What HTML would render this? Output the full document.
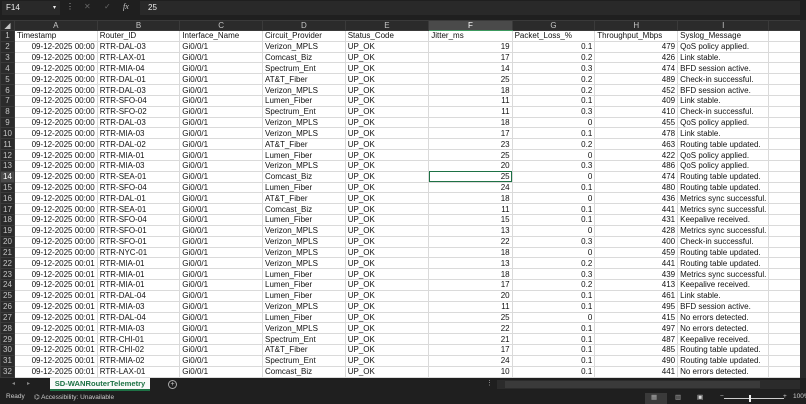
<!DOCTYPE html>
<html><head><meta charset="utf-8"><style>
*{margin:0;padding:0;box-sizing:border-box}
body{width:806px;height:404px;background:#1f1f1f;font-family:"Liberation Sans",sans-serif;overflow:hidden;position:relative;color:#ddd}
.fb{position:absolute;left:0;top:0;width:806px;height:17px;background:#1f1f1f}
.nb{position:absolute;left:2px;top:1px;width:58px;height:14px;background:#292929;font-size:8px;line-height:14px;padding-left:4px;color:#eee}
.fx{position:absolute;left:140px;top:1px;width:660px;height:14px;background:#292929;font-size:8px;line-height:14px;padding-left:8px;color:#eee}
.grid{position:absolute;left:0;top:20px;border-collapse:collapse;table-layout:fixed;font-size:8px}
.grid td{border:1px solid #dadada;background:#fff;color:#111;height:10.84px;line-height:9px;padding:0 2px;white-space:nowrap;overflow:hidden}
.grid tr.h td{background:#2b2b2b;color:#c4c4c4;border-color:#3a3a3a;text-align:center;height:10px}
.grid td.rh{background:#2b2b2b;color:#c4c4c4;border-color:#3a3a3a;text-align:center;padding:0}
.grid td.r{text-align:right}
.grid tr.h td.sel{background:#4a4a4a;color:#fff;border-bottom:1px solid #3c9a5f}
.grid td.rh.sel{background:#4a4a4a;color:#fff}
.grid td.cur{outline:1.5px solid #1e7145;outline-offset:-1px}
.vs{position:absolute;left:800px;top:20px;width:6px;height:358px;background:#2a2a2a}
.bar{position:absolute;left:0;top:378px;width:806px;height:14px;background:#1f1f1f}
.tab{position:absolute;left:50px;top:378px;width:100px;height:13px;background:#fafafa;color:#1e7145;font-weight:bold;font-size:7.6px;text-align:center;line-height:12px;border-bottom:2px solid #1e7145}
.st{position:absolute;top:393px;font-size:6.5px;color:#ccc}
</style></head><body>
<div class="fb"><div class="nb">F14 <span style="float:right;margin-right:4px;font-size:6px">▾</span></div>
<span style="position:absolute;left:66px;top:2px;font-size:8px;color:#aaa">⋮</span>
<span style="position:absolute;left:84px;top:2px;font-size:8px;color:#666">✕</span>
<span style="position:absolute;left:104px;top:2px;font-size:8px;color:#666">✓</span>
<span style="position:absolute;left:123px;top:2px;font-size:8px;color:#ccc;font-style:italic;font-family:'Liberation Serif',serif">fx</span>
<div class="fx">25</div></div>
<table class="grid">
<colgroup><col style="width:14px"><col style="width:83px"><col style="width:83px"><col style="width:83px"><col style="width:83px"><col style="width:84px"><col style="width:84px"><col style="width:83px"><col style="width:83px"><col style="width:83px"><col style="width:37px"></colgroup>
<tr class="h"><td>◢</td><td>A</td><td>B</td><td>C</td><td>D</td><td>E</td><td class="sel">F</td><td>G</td><td>H</td><td>I</td><td></td></tr>
<tr><td class="rh">1</td><td>Timestamp</td><td>Router_ID</td><td>Interface_Name</td><td>Circuit_Provider</td><td>Status_Code</td><td>Jitter_ms</td><td>Packet_Loss_%</td><td>Throughput_Mbps</td><td>Syslog_Message</td><td></td></tr>
<tr><td class="rh">2</td><td class="r">09-12-2025 00:00</td><td>RTR-DAL-03</td><td>Gi0/0/1</td><td>Verizon_MPLS</td><td>UP_OK</td><td class="r">19</td><td class="r">0.1</td><td class="r">479</td><td>QoS policy applied.</td><td></td></tr>
<tr><td class="rh">3</td><td class="r">09-12-2025 00:00</td><td>RTR-LAX-01</td><td>Gi0/0/1</td><td>Comcast_Biz</td><td>UP_OK</td><td class="r">17</td><td class="r">0.2</td><td class="r">426</td><td>Link stable.</td><td></td></tr>
<tr><td class="rh">4</td><td class="r">09-12-2025 00:00</td><td>RTR-MIA-04</td><td>Gi0/0/1</td><td>Spectrum_Ent</td><td>UP_OK</td><td class="r">14</td><td class="r">0.3</td><td class="r">474</td><td>BFD session active.</td><td></td></tr>
<tr><td class="rh">5</td><td class="r">09-12-2025 00:00</td><td>RTR-DAL-01</td><td>Gi0/0/1</td><td>AT&amp;T_Fiber</td><td>UP_OK</td><td class="r">25</td><td class="r">0.2</td><td class="r">489</td><td>Check-in successful.</td><td></td></tr>
<tr><td class="rh">6</td><td class="r">09-12-2025 00:00</td><td>RTR-DAL-03</td><td>Gi0/0/1</td><td>Verizon_MPLS</td><td>UP_OK</td><td class="r">18</td><td class="r">0.2</td><td class="r">452</td><td>BFD session active.</td><td></td></tr>
<tr><td class="rh">7</td><td class="r">09-12-2025 00:00</td><td>RTR-SFO-04</td><td>Gi0/0/1</td><td>Lumen_Fiber</td><td>UP_OK</td><td class="r">11</td><td class="r">0.1</td><td class="r">409</td><td>Link stable.</td><td></td></tr>
<tr><td class="rh">8</td><td class="r">09-12-2025 00:00</td><td>RTR-SFO-02</td><td>Gi0/0/1</td><td>Spectrum_Ent</td><td>UP_OK</td><td class="r">11</td><td class="r">0.3</td><td class="r">410</td><td>Check-in successful.</td><td></td></tr>
<tr><td class="rh">9</td><td class="r">09-12-2025 00:00</td><td>RTR-DAL-03</td><td>Gi0/0/1</td><td>Verizon_MPLS</td><td>UP_OK</td><td class="r">18</td><td class="r">0</td><td class="r">455</td><td>QoS policy applied.</td><td></td></tr>
<tr><td class="rh">10</td><td class="r">09-12-2025 00:00</td><td>RTR-MIA-03</td><td>Gi0/0/1</td><td>Verizon_MPLS</td><td>UP_OK</td><td class="r">17</td><td class="r">0.1</td><td class="r">478</td><td>Link stable.</td><td></td></tr>
<tr><td class="rh">11</td><td class="r">09-12-2025 00:00</td><td>RTR-DAL-02</td><td>Gi0/0/1</td><td>AT&amp;T_Fiber</td><td>UP_OK</td><td class="r">23</td><td class="r">0.2</td><td class="r">463</td><td>Routing table updated.</td><td></td></tr>
<tr><td class="rh">12</td><td class="r">09-12-2025 00:00</td><td>RTR-MIA-01</td><td>Gi0/0/1</td><td>Lumen_Fiber</td><td>UP_OK</td><td class="r">25</td><td class="r">0</td><td class="r">422</td><td>QoS policy applied.</td><td></td></tr>
<tr><td class="rh">13</td><td class="r">09-12-2025 00:00</td><td>RTR-MIA-03</td><td>Gi0/0/1</td><td>Verizon_MPLS</td><td>UP_OK</td><td class="r">20</td><td class="r">0.3</td><td class="r">486</td><td>QoS policy applied.</td><td></td></tr>
<tr><td class="rh sel">14</td><td class="r">09-12-2025 00:00</td><td>RTR-SEA-01</td><td>Gi0/0/1</td><td>Comcast_Biz</td><td>UP_OK</td><td class="r cur">25</td><td class="r">0</td><td class="r">474</td><td>Routing table updated.</td><td></td></tr>
<tr><td class="rh">15</td><td class="r">09-12-2025 00:00</td><td>RTR-SFO-04</td><td>Gi0/0/1</td><td>Lumen_Fiber</td><td>UP_OK</td><td class="r">24</td><td class="r">0.1</td><td class="r">480</td><td>Routing table updated.</td><td></td></tr>
<tr><td class="rh">16</td><td class="r">09-12-2025 00:00</td><td>RTR-DAL-01</td><td>Gi0/0/1</td><td>AT&amp;T_Fiber</td><td>UP_OK</td><td class="r">18</td><td class="r">0</td><td class="r">436</td><td>Metrics sync successful.</td><td></td></tr>
<tr><td class="rh">17</td><td class="r">09-12-2025 00:00</td><td>RTR-SEA-01</td><td>Gi0/0/1</td><td>Comcast_Biz</td><td>UP_OK</td><td class="r">11</td><td class="r">0.1</td><td class="r">441</td><td>Metrics sync successful.</td><td></td></tr>
<tr><td class="rh">18</td><td class="r">09-12-2025 00:00</td><td>RTR-SFO-04</td><td>Gi0/0/1</td><td>Lumen_Fiber</td><td>UP_OK</td><td class="r">15</td><td class="r">0.1</td><td class="r">431</td><td>Keepalive received.</td><td></td></tr>
<tr><td class="rh">19</td><td class="r">09-12-2025 00:00</td><td>RTR-SFO-01</td><td>Gi0/0/1</td><td>Verizon_MPLS</td><td>UP_OK</td><td class="r">13</td><td class="r">0</td><td class="r">428</td><td>Metrics sync successful.</td><td></td></tr>
<tr><td class="rh">20</td><td class="r">09-12-2025 00:00</td><td>RTR-SFO-01</td><td>Gi0/0/1</td><td>Verizon_MPLS</td><td>UP_OK</td><td class="r">22</td><td class="r">0.3</td><td class="r">400</td><td>Check-in successful.</td><td></td></tr>
<tr><td class="rh">21</td><td class="r">09-12-2025 00:00</td><td>RTR-NYC-01</td><td>Gi0/0/1</td><td>Verizon_MPLS</td><td>UP_OK</td><td class="r">18</td><td class="r">0</td><td class="r">459</td><td>Routing table updated.</td><td></td></tr>
<tr><td class="rh">22</td><td class="r">09-12-2025 00:01</td><td>RTR-MIA-01</td><td>Gi0/0/1</td><td>Verizon_MPLS</td><td>UP_OK</td><td class="r">13</td><td class="r">0.2</td><td class="r">441</td><td>Routing table updated.</td><td></td></tr>
<tr><td class="rh">23</td><td class="r">09-12-2025 00:01</td><td>RTR-MIA-01</td><td>Gi0/0/1</td><td>Lumen_Fiber</td><td>UP_OK</td><td class="r">18</td><td class="r">0.3</td><td class="r">439</td><td>Metrics sync successful.</td><td></td></tr>
<tr><td class="rh">24</td><td class="r">09-12-2025 00:01</td><td>RTR-MIA-01</td><td>Gi0/0/1</td><td>Lumen_Fiber</td><td>UP_OK</td><td class="r">17</td><td class="r">0.2</td><td class="r">413</td><td>Keepalive received.</td><td></td></tr>
<tr><td class="rh">25</td><td class="r">09-12-2025 00:01</td><td>RTR-DAL-04</td><td>Gi0/0/1</td><td>Lumen_Fiber</td><td>UP_OK</td><td class="r">20</td><td class="r">0.1</td><td class="r">461</td><td>Link stable.</td><td></td></tr>
<tr><td class="rh">26</td><td class="r">09-12-2025 00:01</td><td>RTR-MIA-03</td><td>Gi0/0/1</td><td>Verizon_MPLS</td><td>UP_OK</td><td class="r">11</td><td class="r">0.1</td><td class="r">495</td><td>BFD session active.</td><td></td></tr>
<tr><td class="rh">27</td><td class="r">09-12-2025 00:01</td><td>RTR-DAL-04</td><td>Gi0/0/1</td><td>Lumen_Fiber</td><td>UP_OK</td><td class="r">25</td><td class="r">0</td><td class="r">415</td><td>No errors detected.</td><td></td></tr>
<tr><td class="rh">28</td><td class="r">09-12-2025 00:01</td><td>RTR-MIA-03</td><td>Gi0/0/1</td><td>Verizon_MPLS</td><td>UP_OK</td><td class="r">22</td><td class="r">0.1</td><td class="r">497</td><td>No errors detected.</td><td></td></tr>
<tr><td class="rh">29</td><td class="r">09-12-2025 00:01</td><td>RTR-CHI-01</td><td>Gi0/0/1</td><td>Spectrum_Ent</td><td>UP_OK</td><td class="r">21</td><td class="r">0.1</td><td class="r">487</td><td>Keepalive received.</td><td></td></tr>
<tr><td class="rh">30</td><td class="r">09-12-2025 00:01</td><td>RTR-CHI-02</td><td>Gi0/0/1</td><td>AT&amp;T_Fiber</td><td>UP_OK</td><td class="r">17</td><td class="r">0.1</td><td class="r">485</td><td>Routing table updated.</td><td></td></tr>
<tr><td class="rh">31</td><td class="r">09-12-2025 00:01</td><td>RTR-MIA-02</td><td>Gi0/0/1</td><td>Spectrum_Ent</td><td>UP_OK</td><td class="r">24</td><td class="r">0.1</td><td class="r">490</td><td>Routing table updated.</td><td></td></tr>
<tr><td class="rh">32</td><td class="r">09-12-2025 00:01</td><td>RTR-LAX-01</td><td>Gi0/0/1</td><td>Comcast_Biz</td><td>UP_OK</td><td class="r">10</td><td class="r">0.1</td><td class="r">441</td><td>No errors detected.</td><td></td></tr>
</table>
<div class="vs"></div>
<div class="bar"></div>
<span style="position:absolute;left:12px;top:380px;font-size:6px;color:#888">◂</span>
<span style="position:absolute;left:27px;top:380px;font-size:6px;color:#888">▸</span>
<div class="tab">SD-WANRouterTelemetry</div>
<div style="position:absolute;left:168px;top:380px;width:9px;height:9px;border:1px solid #aaa;border-radius:50%;font-size:7px;line-height:7px;text-align:center;color:#ccc">+</div>
<span style="position:absolute;left:486px;top:379px;font-size:7px;color:#aaa">⋮</span>
<div style="position:absolute;left:497px;top:380px;width:303px;height:9px;background:#2b2b2b"></div>
<div style="position:absolute;left:505px;top:381px;width:255px;height:7px;background:#3a3a3a"></div>
<div class="st" style="left:6px">Ready</div>
<div class="st" style="left:34px">⌬ Accessibility: Unavailable</div>
<div style="position:absolute;left:645px;top:393px;width:22px;height:11px;background:#3a3a3a"></div>
<div class="st" style="left:651px;color:#aaa">▦</div>
<div class="st" style="left:675px;color:#aaa">▥</div>
<div class="st" style="left:697px;color:#ddd">▣</div>
<div class="st" style="left:720px">−</div>
<div style="position:absolute;left:724px;top:398px;width:60px;height:1px;background:#ccc"></div>
<div style="position:absolute;left:749px;top:395px;width:2px;height:7px;background:#eee"></div>
<div class="st" style="left:783px">+</div>
<div class="st" style="left:793px">100%</div>
</body></html>
